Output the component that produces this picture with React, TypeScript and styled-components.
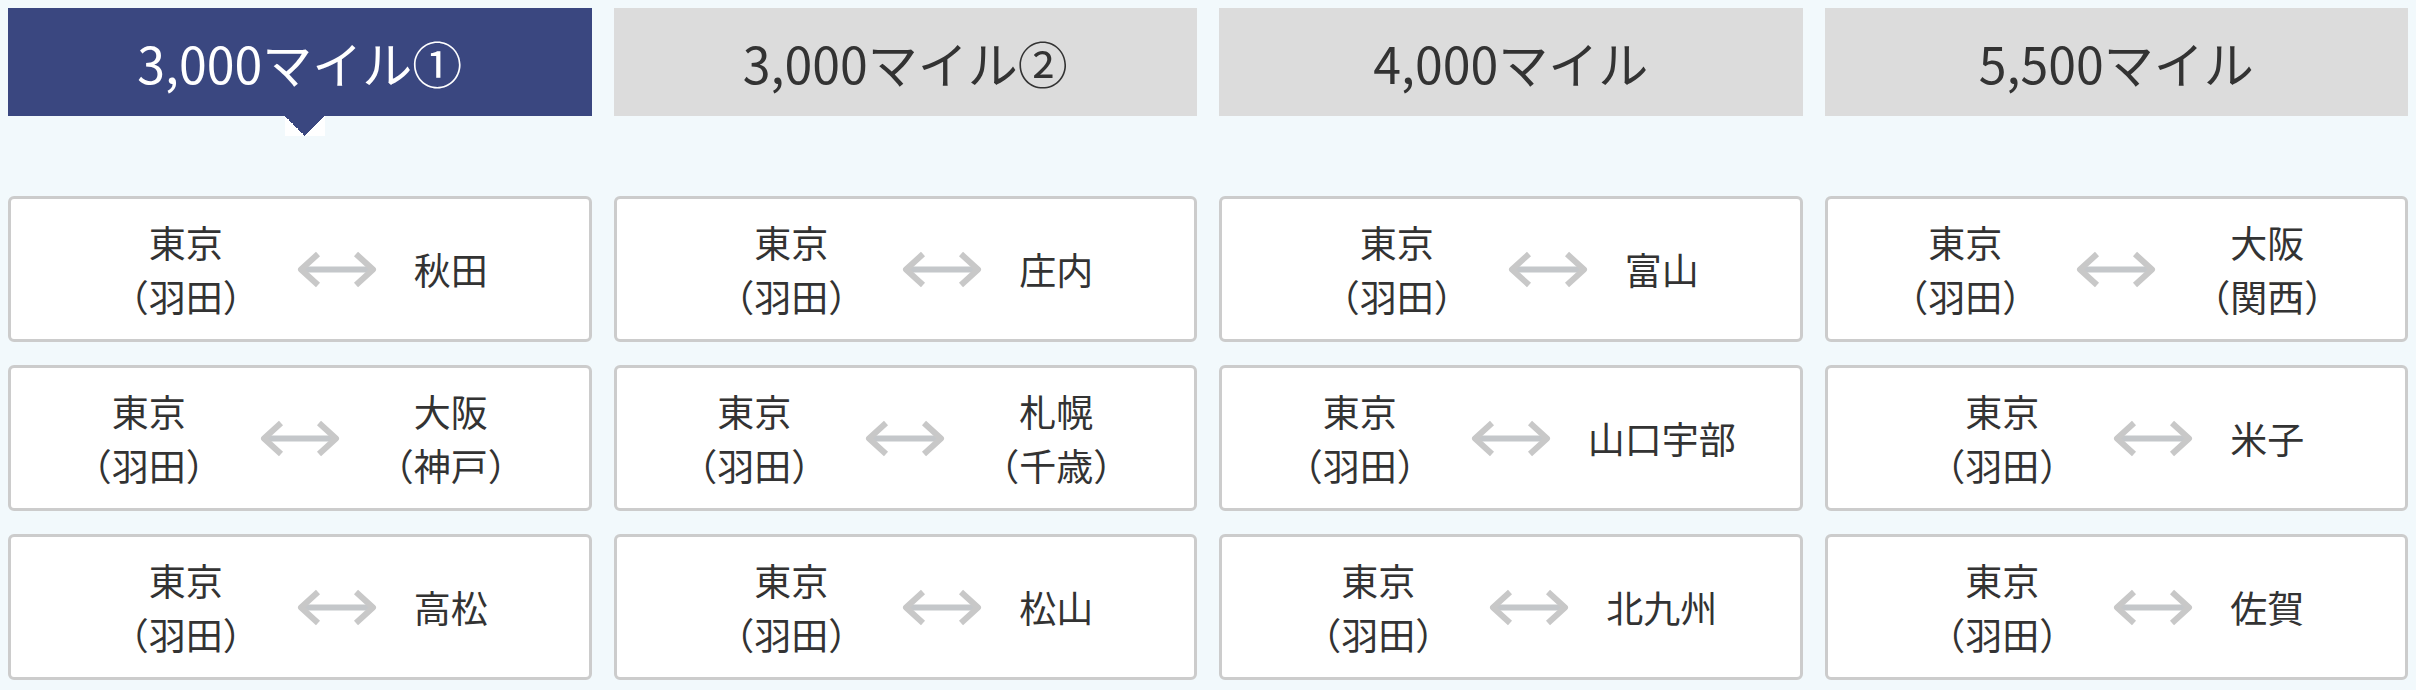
import styled, { createGlobalStyle } from "styled-components";

const GlobalStyle = createGlobalStyle`
  html, body {
    background: #f2f9fc;
  }
  body {
    margin: 8px;
    font-family: "Noto Sans CJK JP", "Noto Sans", sans-serif;
    color: #333333;
  }
`;

type Route = { from: string[]; to: string[] };
type MileColumn = { label: string; routes: Route[] };

const HANEDA = ["東京", "（羽田）"];

const columns: MileColumn[] = [
  {
    label: "3,000マイル①",
    routes: [
      { from: HANEDA, to: ["秋田"] },
      { from: HANEDA, to: ["大阪", "（神戸）"] },
      { from: HANEDA, to: ["高松"] },
    ],
  },
  {
    label: "3,000マイル②",
    routes: [
      { from: HANEDA, to: ["庄内"] },
      { from: HANEDA, to: ["札幌", "（千歳）"] },
      { from: HANEDA, to: ["松山"] },
    ],
  },
  {
    label: "4,000マイル",
    routes: [
      { from: HANEDA, to: ["富山"] },
      { from: HANEDA, to: ["山口宇部"] },
      { from: HANEDA, to: ["北九州"] },
    ],
  },
  {
    label: "5,500マイル",
    routes: [
      { from: HANEDA, to: ["大阪", "（関西）"] },
      { from: HANEDA, to: ["米子"] },
      { from: HANEDA, to: ["佐賀"] },
    ],
  },
];

function RouteArrow() {
  return (
    <ArrowSvg width="82" height="37" viewBox="0 0 82 37">
      <path d="M6 18.5H76" stroke="#c4c7ca" strokeWidth="6" fill="none" />
      <path
        d="M22 3L5 18.5L22 34M60 3L77 18.5L60 34"
        stroke="#c8c8c8"
        strokeWidth="6"
        strokeLinejoin="round"
        fill="none"
      />
    </ArrowSvg>
  );
}

export default function App() {
  return (
    <>
      <GlobalStyle />
      <Board>
        {columns.map((col, i) => (
          <Column key={col.label}>
            <Tab $active={i === 0}>{col.label}</Tab>
            <RouteList>
              {col.routes.map((r, j) => (
                <RouteCard key={j}>
                  <Place>
                    {r.from.map((line) => (
                      <div key={line}>{line}</div>
                    ))}
                  </Place>
                  <RouteArrow />
                  <Place>
                    {r.to.map((line) => (
                      <div key={line}>{line}</div>
                    ))}
                  </Place>
                </RouteCard>
              ))}
            </RouteList>
          </Column>
        ))}
      </Board>
    </>
  );
}

const Board = styled.div`
  display: grid;
  grid-template-columns: repeat(4, 1fr);
  column-gap: 22px;
  padding-bottom: 2px;
`;

const Column = styled.div`
  display: flex;
  flex-direction: column;
`;

const Tab = styled.div<{ $active: boolean }>`
  position: relative;
  height: 108px;
  display: flex;
  align-items: center;
  justify-content: center;
  font-size: 50px;
  background: ${(p) => (p.$active ? "#3a4780" : "#dcdcdc")};
  color: ${(p) => (p.$active ? "#ffffff" : "#333333")};

  ${(p) =>
    p.$active &&
    `
    &::after {
      content: "";
      position: absolute;
      top: 100%;
      left: calc(50% - 15px);
      width: 40px;
      height: 20px;
      background:
        linear-gradient(to bottom left, #3a4780 50%, transparent 50%) left / 50% 100% no-repeat,
        linear-gradient(to bottom right, #3a4780 50%, transparent 50%) right / 50% 100% no-repeat,
        #ffffff;
    }
  `}
`;

const RouteList = styled.div`
  display: flex;
  flex-direction: column;
  gap: 23px;
  margin-top: 80px;
`;

const RouteCard = styled.div`
  box-sizing: border-box;
  height: 146px;
  display: flex;
  align-items: center;
  justify-content: center;
  background: #ffffff;
  border: 3px solid #cccccc;
  border-radius: 6px;
`;

const Place = styled.div`
  font-size: 37px;
  line-height: 54px;
  text-align: center;
  white-space: nowrap;
`;

const ArrowSvg = styled.svg`
  flex-shrink: 0;
  margin: 0 36px;
`;
